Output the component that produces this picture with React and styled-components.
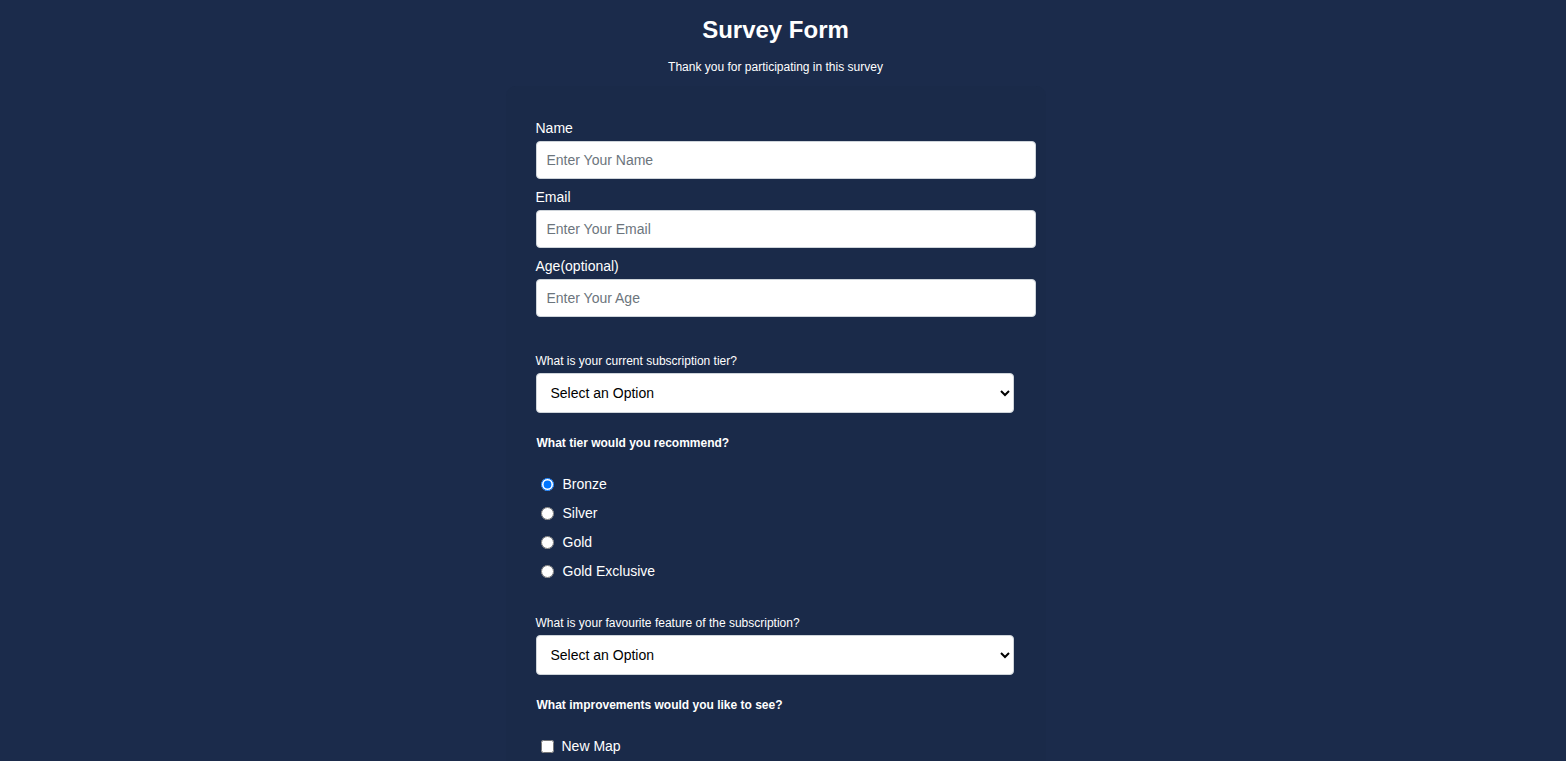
import React from 'react'
import styled, { createGlobalStyle } from 'styled-components'

const GlobalStyle = createGlobalStyle`
  html, body {
    margin: 0;
    padding: 0;
    background: #1b2b4b;
    font-family: "Liberation Sans", Arial, sans-serif;
    color: #ffffff;
  }
`

const Page = styled.div`
  display: flex;
  flex-direction: column;
  align-items: center;
  padding: 0 15px 40px 0;
`

const Title = styled.h1`
  margin: 16px 0 0 0;
  font-size: 24px;
  line-height: 28px;
  font-weight: 700;
`

const Subtitle = styled.p`
  margin: 16px 0 12px 0;
  font-size: 12px;
  line-height: 14px;
`

const Card = styled.form`
  width: 540px;
  box-sizing: border-box;
  padding: 34px 30px 30px 30px;
  background: #1a2a49;
  border-radius: 10px;
`

const Field = styled.div`
  margin-bottom: 10px;
`

const Label = styled.label`
  display: block;
  font-size: 14px;
  line-height: 16px;
  margin-bottom: 5px;
`

const TextInput = styled.input`
  display: block;
  width: 500px;
  height: 38px;
  box-sizing: border-box;
  padding: 0 10px;
  border: 1px solid #ced4da;
  border-radius: 4px;
  font-family: "Liberation Sans", Arial, sans-serif;
  font-size: 14px;
  color: #333;

  &::placeholder {
    color: #6c757d;
  }
`

const Question = styled.div`
  margin-top: ${p => p.$top || 0}px;
`

const SmallLabel = styled.label`
  display: block;
  font-size: 12px;
  line-height: 14px;
  margin-bottom: 5px;
`

const Select = styled.select`
  display: block;
  width: 478px;
  height: 40px;
  box-sizing: border-box;
  padding: 0 10px;
  border: 1px solid #ced4da;
  border-radius: 4px;
  background: #ffffff;
  font-family: "Liberation Sans", Arial, sans-serif;
  font-size: 14px;
  color: #000;
`

const Heading = styled.p`
  margin: 23px 0 0 1px;
  font-size: 12px;
  line-height: 14px;
  font-weight: 700;
`

const OptionList = styled.div`
  display: flex;
  flex-direction: column;
  gap: 13px;
  margin-top: 26px;
`

const OptionRow = styled.label`
  display: flex;
  align-items: center;
  font-size: 14px;
  line-height: 16px;

  input {
    width: 13px;
    height: 13px;
    margin: 0 ${p => p.$gap}px 0 5px;
  }
`

const tiers = ['Bronze', 'Silver', 'Gold', 'Gold Exclusive']
const improvements = ['New Map', 'More Skins', 'Better Servers', 'Ranked Mode']

export default function App() {
  return (
    <>
      <GlobalStyle />
      <Page>
        <Title>Survey Form</Title>
        <Subtitle>Thank you for participating in this survey</Subtitle>
        <Card onSubmit={e => e.preventDefault()}>
          <Field>
            <Label htmlFor="name">Name</Label>
            <TextInput id="name" type="text" placeholder="Enter Your Name" />
          </Field>
          <Field>
            <Label htmlFor="email">Email</Label>
            <TextInput id="email" type="email" placeholder="Enter Your Email" />
          </Field>
          <Field>
            <Label htmlFor="age">Age(optional)</Label>
            <TextInput id="age" type="number" placeholder="Enter Your Age" />
          </Field>

          <Question $top={37}>
            <SmallLabel htmlFor="tier">What is your current subscription tier?</SmallLabel>
            <Select id="tier" defaultValue="">
              <option value="" disabled>Select an Option</option>
              <option>Bronze</option>
              <option>Silver</option>
              <option>Gold</option>
              <option>Gold Exclusive</option>
            </Select>
          </Question>

          <Heading>What tier would you recommend?</Heading>
          <OptionList>
            {tiers.map((t, i) => (
              <OptionRow key={t} $gap={9}>
                <input type="radio" name="recommend" defaultChecked={i === 0} />
                {t}
              </OptionRow>
            ))}
          </OptionList>

          <Question $top={37}>
            <SmallLabel htmlFor="feature">What is your favourite feature of the subscription?</SmallLabel>
            <Select id="feature" defaultValue="">
              <option value="" disabled>Select an Option</option>
              <option>Exclusive Skins</option>
              <option>Early Access</option>
              <option>Priority Queue</option>
            </Select>
          </Question>

          <Heading>What improvements would you like to see?</Heading>
          <OptionList>
            {improvements.map(t => (
              <OptionRow key={t} $gap={8}>
                <input type="checkbox" />
                {t}
              </OptionRow>
            ))}
          </OptionList>
        </Card>
      </Page>
    </>
  )
}
